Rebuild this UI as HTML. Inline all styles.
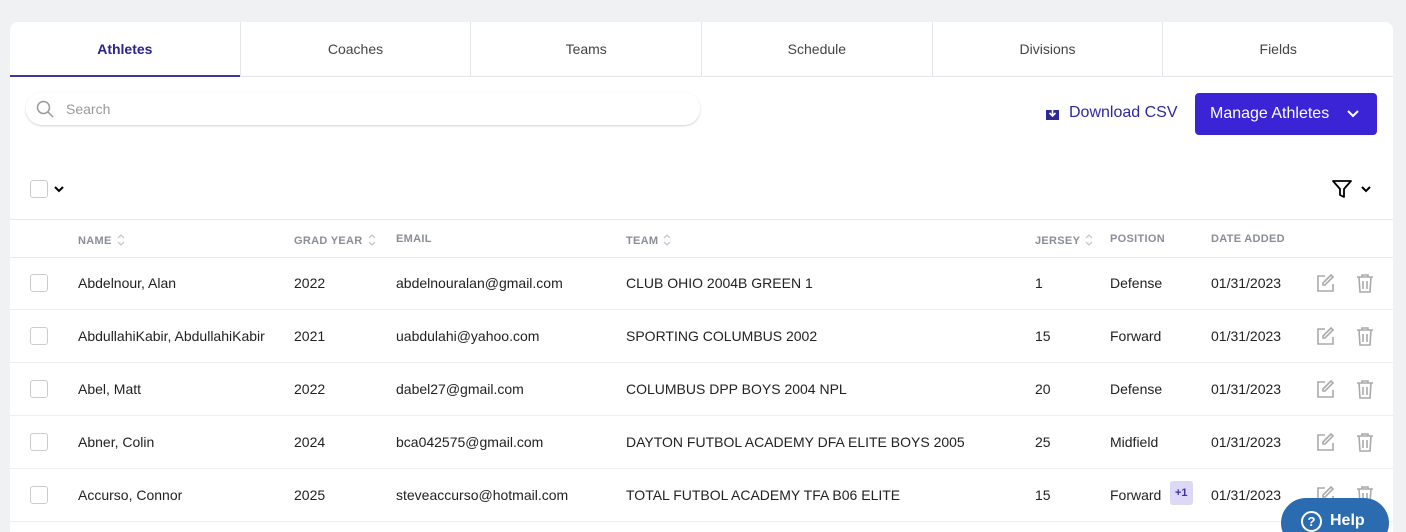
<!DOCTYPE html><html><head><style>
html,body{margin:0;width:1406px;height:532px;overflow:hidden}
body{background:#f0f1f3;font-family:"Liberation Sans",sans-serif;position:relative;color:#222}
.card{position:absolute;left:10px;top:22px;width:1383px;height:510px;background:#fff;border-radius:8px 8px 0 0;overflow:hidden}
.tabs{display:flex;height:54px;border-bottom:1px solid #e5e6ea}
.tab{flex:1;display:flex;align-items:center;justify-content:center;font-size:14px;color:#444;border-left:1px solid #e5e6ea}
.tab:first-child{border-left:none;color:#2a2290;font-weight:bold;border-bottom:2px solid #3d35a8;margin-bottom:-1px}
.search{position:absolute;left:16px;top:70px;width:674px;height:33px;border-radius:16px;box-shadow:0 1px 2px rgba(0,0,0,.18);}
.search span{position:absolute;left:40px;top:9px;font-size:14px;color:#999}
.dl{position:absolute;top:82px;font-size:16px;color:#2f289a}
.btn{position:absolute;left:1185px;top:71px;width:182px;height:42px;background:#3a24d6;border-radius:4px;color:#fff;font-size:16px;line-height:42px;padding-left:15px;box-sizing:border-box}
.cb{position:absolute;width:18px;height:18px;border:1px solid #ccc;border-radius:3px;box-sizing:border-box}
.hdr{position:absolute;top:197px;left:0;width:100%;height:37px;border-top:1px solid #e8e9ec;border-bottom:1px solid #e8e9ec}
.h{position:absolute;top:13px;font-size:11px;font-weight:bold;color:#8a8e99;letter-spacing:.3px}
.row{position:absolute;left:0;width:100%;height:52px;border-bottom:1px solid #eceef1;font-size:14px}
.row div{position:absolute;top:18px}
.sort{position:relative;display:inline-block;width:10px;height:14px;vertical-align:-3px;margin-left:4px}
</style></head><body>
<div class="card">
<div class="tabs"><div class="tab">Athletes</div><div class="tab">Coaches</div><div class="tab">Teams</div><div class="tab">Schedule</div><div class="tab">Divisions</div><div class="tab">Fields</div></div>
<div class="search"><svg style="position:absolute;left:10px;top:8px" width="18" height="18" viewBox="0 0 18 18"><circle cx="7.5" cy="7.5" r="6" fill="none" stroke="#999" stroke-width="1.5"/><path d="M12 12l5 5" stroke="#999" stroke-width="1.5"/></svg><span>Search</span></div>
<svg style="position:absolute;left:1036px;top:85px" width="13" height="13" viewBox="0 0 13 13"><rect x="0" y="3" width="13" height="10" fill="#2f289a"/><path d="M6.5 0v9M3.5 6l3 3 3-3" stroke="#fff" stroke-width="1.6" fill="none"/></svg>
<div class="dl" style="left:1059px">Download CSV</div>
<div class="btn">Manage Athletes <svg style="position:absolute;right:18px;top:16px" width="12" height="9" viewBox="0 0 12 9"><path d="M1 2l5 5 5-5" stroke="#fff" stroke-width="2" fill="none"/></svg></div>
<div class="cb" style="left:20px;top:158px"></div>
<svg style="position:absolute;left:43px;top:163px" width="12" height="8" viewBox="0 0 12 8"><path d="M2 2l4 4 4-4" stroke="#000" stroke-width="2" fill="none"/></svg>
<svg style="position:absolute;left:1321px;top:156px" width="22" height="22" viewBox="0 0 22 22"><path d="M2 3h18l-7 8v8l-4-2v-6z" fill="none" stroke="#000" stroke-width="1.8" stroke-linejoin="round"/></svg>
<svg style="position:absolute;left:1350px;top:163px" width="12" height="8" viewBox="0 0 12 8"><path d="M2 2l4 4 4-4" stroke="#000" stroke-width="2" fill="none"/></svg>
<div class="hdr">
<div class="h" style="left:68px">NAME<svg class="sort" viewBox="0 0 10 14"><path d="M2 5l3-3 3 3M2 9l3 3 3-3" fill="none" stroke="#c5c8cf" stroke-width="1.3"/></svg></div>
<div class="h" style="left:284px">GRAD YEAR<svg class="sort" viewBox="0 0 10 14"><path d="M2 5l3-3 3 3M2 9l3 3 3-3" fill="none" stroke="#c5c8cf" stroke-width="1.3"/></svg></div>
<div class="h" style="left:386px">EMAIL</div>
<div class="h" style="left:616px">TEAM<svg class="sort" viewBox="0 0 10 14"><path d="M2 5l3-3 3 3M2 9l3 3 3-3" fill="none" stroke="#c5c8cf" stroke-width="1.3"/></svg></div>
<div class="h" style="left:1025px">JERSEY<svg class="sort" viewBox="0 0 10 14"><path d="M2 5l3-3 3 3M2 9l3 3 3-3" fill="none" stroke="#c5c8cf" stroke-width="1.3"/></svg></div>
<div class="h" style="left:1100px">POSITION</div>
<div class="h" style="left:1201px">DATE ADDED</div>
</div>
<div id="rows"></div>
</div>
<div style="position:absolute;left:1281px;top:498px;width:108px;height:50px;border-radius:25px;background:#2b6cb0;color:#fff;font-weight:bold;font-size:16px"><span style="position:absolute;left:20px;top:13px;width:17px;height:17px;border:2px solid #fff;border-radius:50%;font-size:13px;text-align:center;line-height:17px">?</span><span style="position:absolute;left:49px;top:14px">Help</span></div>
<script>
var d=[["Abdelnour, Alan","2022","abdelnouralan@gmail.com","CLUB OHIO 2004B GREEN 1","1","Defense"],["AbdullahiKabir, AbdullahiKabir","2021","uabdulahi@yahoo.com","SPORTING COLUMBUS 2002","15","Forward"],["Abel, Matt","2022","dabel27@gmail.com","COLUMBUS DPP BOYS 2004 NPL","20","Defense"],["Abner, Colin","2024","bca042575@gmail.com","DAYTON FUTBOL ACADEMY DFA ELITE BOYS 2005","25","Midfield"],["Accurso, Connor","2025","steveaccurso@hotmail.com","TOTAL FUTBOL ACADEMY TFA B06 ELITE","15","Forward"]];
var h="";d.forEach(function(r,i){var y=235+53*i;
h+='<div class="row" style="top:'+y+'px"><span class="cb" style="left:20px;top:17px"></span><div style="left:68px">'+r[0]+'</div><div style="left:284px">'+r[1]+'</div><div style="left:386px">'+r[2]+'</div><div style="left:616px">'+r[3]+'</div><div style="left:1025px">'+r[4]+'</div><div style="left:1100px">'+r[5]+'</div>'+(i==4?'<div style="left:1160px;top:12px;background:#dcd8f5;color:#3a2fb0;font-size:11px;font-weight:bold;padding:6px 5px;border-radius:3px">+1</div>':'')+'<div style="left:1201px">01/31/2023</div>'+
'<svg style="position:absolute;left:1305px;top:16px" width="20" height="20" viewBox="0 0 20 20"><path d="M10 3H3v15h15v-7" fill="none" stroke="#aaa" stroke-width="1.6"/><path d="M16 2l2 2-8 8H8v-2z" fill="none" stroke="#aaa" stroke-width="1.6"/></svg>'+
'<svg style="position:absolute;left:1346px;top:16px" width="18" height="20" viewBox="0 0 18 20"><path d="M1 4h16M6 4V2h6v2M3 4l1 15h10l1-15M7 8v8M11 8v8" fill="none" stroke="#aaa" stroke-width="1.6"/></svg></div>';});
document.getElementById("rows").innerHTML=h;
</script>
</body></html>
